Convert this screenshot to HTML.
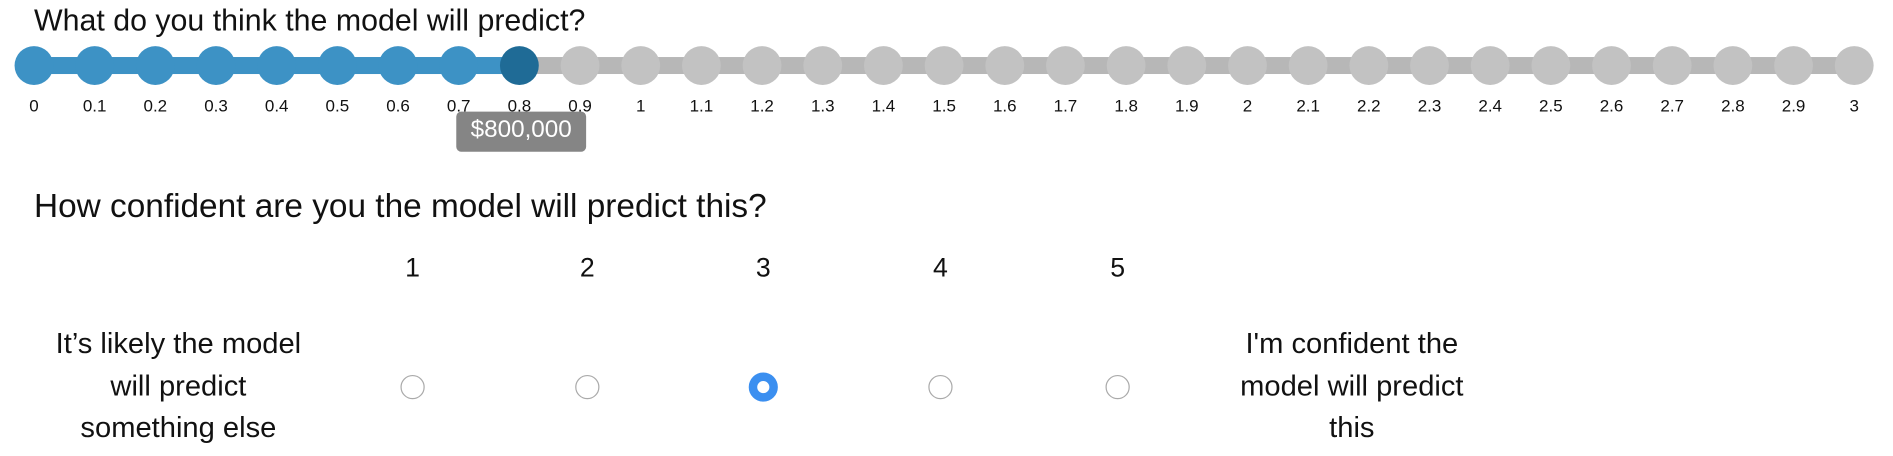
<!DOCTYPE html>
<html><head><meta charset="utf-8"><style>
html,body{margin:0;padding:0;background:#fff;overflow:hidden;width:1893px;height:456px}
#w{position:absolute;left:0;top:0;width:1560px;height:376px;transform:scale(1.2135);transform-origin:0 0;font-family:"Liberation Sans",Arial,sans-serif;color:#111}
.a{position:absolute;white-space:nowrap}
.dot{position:absolute;width:32px;height:32px;border-radius:50%;top:38px}
.lb{position:absolute;top:79px;font-size:14px;transform:translateX(-50%)}
.n{position:absolute;top:208px;font-size:22px;transform:translateX(-50%)}
.r{position:absolute;top:309px;width:20px;height:20px;border-radius:50%;border:1px solid #aaa;background:#fff;transform:translateX(-50%);box-sizing:border-box}
.t{position:absolute;font-size:24px;text-align:center;line-height:34.5px;transform:translateX(-50%);white-space:nowrap}
</style></head><body><div id="w">
<div class="a" style="left:28px;top:3px;font-size:25px">What do you think the model will predict?</div>
<div style="position:absolute;left:28px;top:47px;width:1507px;height:14px;background:#b7b7b7"></div>
<div style="position:absolute;left:28px;top:47px;width:402px;height:14px;background:#3d92c5"></div>
<div id="dots"></div>
<div style="position:absolute;left:376px;top:92px;width:107px;height:33px;background:#858585;border-radius:4px;color:#fff;font-size:20px;line-height:31px;text-align:center">$800,000</div>
<div class="a" style="left:28px;top:154px;font-size:27.5px">How confident are you the model will predict this?</div>
<div class="n" style="left:340px">1</div><div class="n" style="left:484px">2</div><div class="n" style="left:629px">3</div><div class="n" style="left:775px">4</div><div class="n" style="left:921px">5</div>
<div class="r" style="left:340px"></div><div class="r" style="left:484px"></div>
<div class="r" style="left:629px;border:7px solid #3b8ff0;background:#fff;width:24px;height:24px;top:307px"></div>
<div class="r" style="left:775px"></div><div class="r" style="left:921px"></div>
<div class="t" style="left:147px;top:267px">It’s likely the model<br>will predict<br>something else</div>
<div class="t" style="left:1114px;top:267px">I'm confident the<br>model will predict<br>this</div>
</div>
<script>
var d=document.getElementById('dots'),h='';
for(var i=0;i<=30;i++){var x=28+i*50.0;var c=i<8?'#3d92c5':(i==8?'#1f6b96':'#c2c2c2');
h+='<div class="dot" style="left:'+(x-16)+'px;background:'+c+'"></div>';
var s=i==0?'0':(i%10==0?String(i/10):(i/10).toFixed(1));
h+='<div class="lb" style="left:'+x+'px">'+s+'</div>';}
d.innerHTML=h;
</script>
</body></html>
